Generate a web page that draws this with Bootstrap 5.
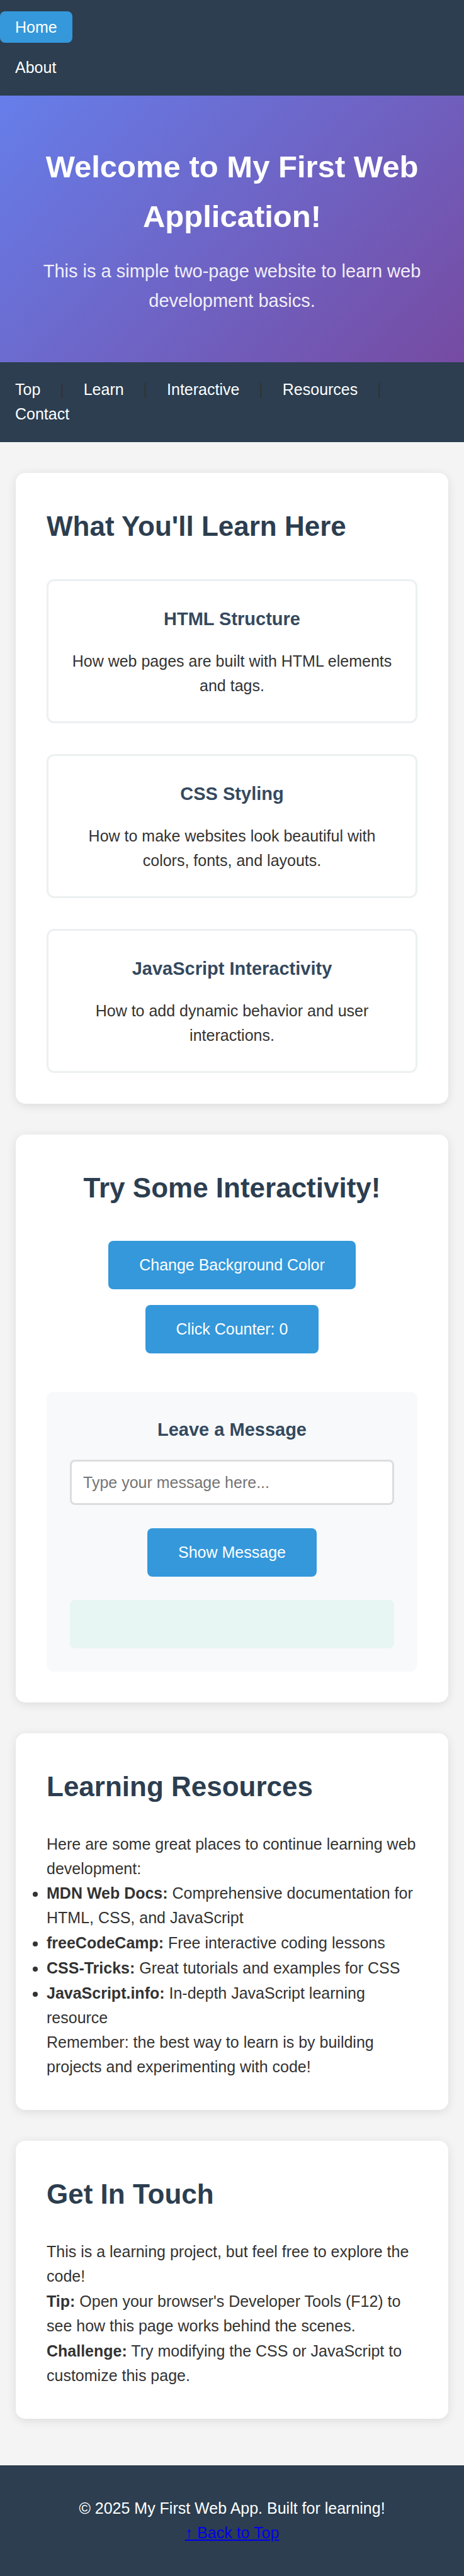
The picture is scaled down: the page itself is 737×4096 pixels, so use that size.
<!DOCTYPE html>
<html lang="en">
<head>
<meta charset="utf-8">
<meta name="viewport" content="width=device-width, initial-scale=1">
<title>My First Web App</title>
<link href="https://cdn.jsdelivr.net/npm/bootstrap@5.3.0/dist/css/bootstrap.min.css" rel="stylesheet">
<style>
  body { background: #f4f4f4; color: #333; font-family: "Liberation Sans", Arial, sans-serif; font-size: 25px; line-height: 39px; }
  h1, h2, h3 { font-weight: 700; }
  h1 { font-size: 49px; line-height: 79px; margin-bottom: 24px; }
  h2 { font-size: 44px; line-height: 71px; margin-bottom: 37px; color: #2c3e50; }
  h3 { font-size: 29px; line-height: 46px; margin-bottom: 25px; color: #34495e; }
  p { margin: 0; }
  .bar { background: #2c3e50; padding: 24px 0 25px; }
  .bar a { color: #fff; text-decoration: none; padding: 11px 24px; border-radius: 8px; }
  .bar a.active { background: #3498db; }
  .pages { gap: 25px; }
  .hero { background: linear-gradient(135deg, #667eea 0%, #764ba2 100%); color: #fff; padding: 74px 49px; }
  .hero p { font-size: 29px; line-height: 47px; opacity: .9; }
  main { padding: 49px 25px; }
  .stack { gap: 49px; }
  .panel { background: #fff; border-radius: 15px; padding: 49px; box-shadow: 0 3px 15px rgba(0, 0, 0, .1); }
  .features { margin-top: 49px; }
  .feature { border: 3px solid #ecf0f1; border-radius: 12px; padding: 37px; }
  .action { background: #3498db; color: #fff; border: 0; border-radius: 8px; padding: 19px 49px; font-size: 25px; line-height: 39px; }
  .action:hover { background: #2980b9; color: #fff; }
  .actions { gap: 25px; padding: 12px 0; margin-bottom: 49px; }
  .message { background: #f8f9fa; border-radius: 12px; padding: 37px; }
  .message .form-control { border: 3px solid #ddd; border-radius: 8px; padding: 14px 18px; font-size: 25px; line-height: 38px; margin-bottom: 37px; }
  .message .form-control::placeholder { color: #757575; }
  .reply { background: #e8f6f3; border-radius: 8px; min-height: 77px; margin-top: 37px; }
  .copy ul { margin: 0; padding: 0; }
  .copy p + p, .copy li + li { margin-top: 1px; }
  footer { background: #2c3e50; color: #fff; padding: 49px; margin-top: 25px; }
  footer a { color: #00e; }
</style>
</head>
<body id="top">
<nav class="bar" aria-label="Pages">
  <ul class="pages list-unstyled d-flex flex-column mb-0">
    <li><a class="active" href="#top" aria-current="page">Home</a></li>
    <li><a href="#about">About</a></li>
  </ul>
</nav>

<header class="hero text-center">
  <h1>Welcome to My First Web Application!</h1>
  <p>This is a simple two-page website to learn web development basics.</p>
</header>

<nav class="bar" aria-label="Sections">
  <a href="#top">Top</a> |
  <a href="#learn">Learn</a> |
  <a href="#interactive">Interactive</a> |
  <a href="#resources">Resources</a> |
  <a class="d-inline-block py-0" href="#contact">Contact</a>
</nav>

<main class="stack d-flex flex-column">
  <section id="learn" class="panel">
    <h2>What You'll Learn Here</h2>
    <div class="features stack d-flex flex-column text-center">
      <div class="feature">
        <h3>HTML Structure</h3>
        <p>How web pages are built with HTML elements and tags.</p>
      </div>
      <div class="feature">
        <h3>CSS Styling</h3>
        <p>How to make websites look beautiful with colors, fonts, and layouts.</p>
      </div>
      <div class="feature">
        <h3>JavaScript Interactivity</h3>
        <p>How to add dynamic behavior and user interactions.</p>
      </div>
    </div>
  </section>

  <section id="interactive" class="panel text-center">
    <h2>Try Some Interactivity!</h2>
    <div class="actions d-flex flex-column align-items-center">
      <button type="button" class="btn action" id="colorButton">Change Background Color</button>
      <button type="button" class="btn action" id="counterButton">Click Counter: 0</button>
    </div>
    <div class="message">
      <h3><label for="messageInput">Leave a Message</label></h3>
      <input type="text" class="form-control" id="messageInput" placeholder="Type your message here...">
      <button type="button" class="btn action" id="messageButton">Show Message</button>
      <div class="reply" id="reply" role="status"></div>
    </div>
  </section>

  <section id="resources" class="panel copy">
    <h2>Learning Resources</h2>
    <p>Here are some great places to continue learning web development:</p>
    <ul>
      <li><strong>MDN Web Docs:</strong> Comprehensive documentation for HTML, CSS, and JavaScript</li>
      <li><strong>freeCodeCamp:</strong> Free interactive coding lessons</li>
      <li><strong>CSS-Tricks:</strong> Great tutorials and examples for CSS</li>
      <li><strong>JavaScript.info:</strong> In-depth JavaScript learning resource</li>
    </ul>
    <p>Remember: the best way to learn is by building projects and experimenting with code!</p>
  </section>

  <section id="contact" class="panel copy">
    <h2>Get In Touch</h2>
    <p>This is a learning project, but feel free to explore the code!</p>
    <p><strong>Tip:</strong> Open your browser's Developer Tools (F12) to see how this page works behind the scenes.</p>
    <p><strong>Challenge:</strong> Try modifying the CSS or JavaScript to customize this page.</p>
  </section>
</main>

<footer class="text-center">
  <p>© 2025 My First Web App. Built for learning!</p>
  <a href="#top">↑ Back to Top</a>
</footer>

<script src="https://cdn.jsdelivr.net/npm/bootstrap@5.3.0/dist/js/bootstrap.bundle.min.js"></script>
<script>
  const colors = ['#f4f4f4', '#e8f6f3', '#fdebd0', '#ebdef0'];
  let colorIndex = 0, clicks = 0;
  document.getElementById('colorButton').addEventListener('click', () => {
    colorIndex = (colorIndex + 1) % colors.length;
    document.body.style.backgroundColor = colors[colorIndex];
  });
  document.getElementById('counterButton').addEventListener('click', e => {
    e.target.textContent = 'Click Counter: ' + (++clicks);
  });
  document.getElementById('messageButton').addEventListener('click', () => {
    document.getElementById('reply').textContent = document.getElementById('messageInput').value;
  });
</script>
</body>
</html>
